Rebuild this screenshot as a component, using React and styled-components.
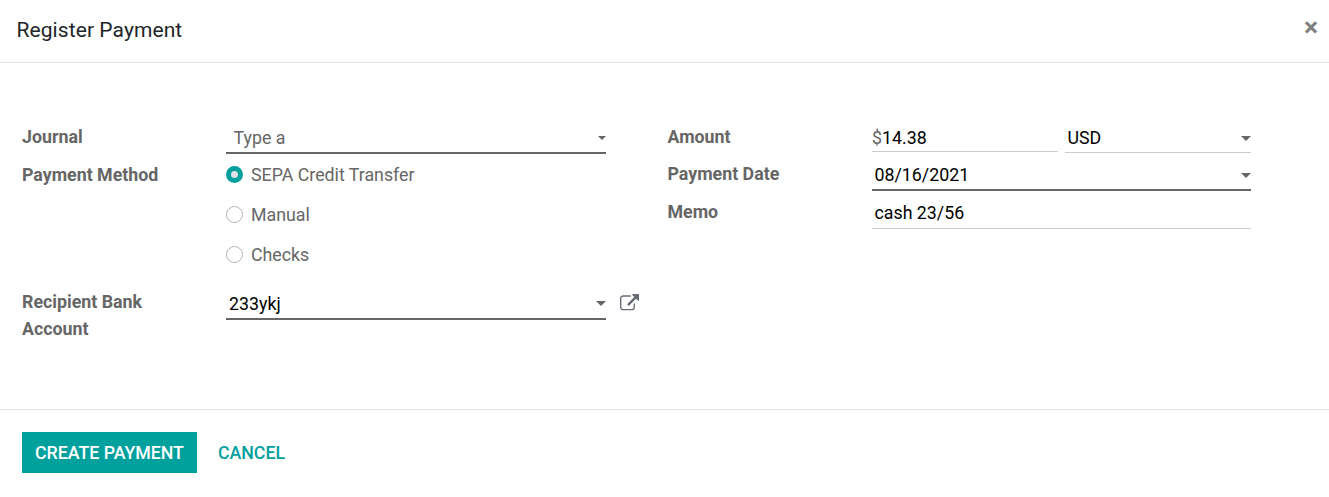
import React from 'react';
import styled, { createGlobalStyle } from 'styled-components';

const GlobalStyle = createGlobalStyle`
  * {
    box-sizing: border-box;
  }
  body {
    margin: 0;
    background: #fff;
    font-family: Roboto, sans-serif;
    font-size: 17.8px;
    line-height: 27px;
    color: #666;
  }
`

const Modal = styled.div`
  display: flex;
  flex-direction: column;
  height: 497px;
`

const Header = styled.header`
  display: flex;
  justify-content: space-between;
  height: 63px;
  padding: 16px 11px 0 16.5px;
  border-bottom: 1px solid #dee2e6;
`

const Title = styled.h4`
  margin: 0;
  font-size: 21px;
  font-weight: 400;
  line-height: 28px;
  letter-spacing: 0.08px;
  color: #212529;
`

const CloseButton = styled.button`
  margin: -3px 0 0 0;
  padding: 0;
  border: 0;
  background: none;
  font: 700 26.6px/27px Roboto, sans-serif;
  height: 27px;
  color: #7f7f7f;
`

const Body = styled.main`
  display: flex;
  gap: 27.5px;
  height: 346px;
  padding: 59px 22px 0;
`

const Group = styled.div`
  flex: none;
  width: ${ props => props.$width }px;
`

const Row = styled.div`
  display: flex;
  height: ${ props => props.$height }px;
`

const Label = styled.label`
  flex: none;
  width: ${ props => props.$width || 204 }px;
  padding: ${ props => props.$top || 0 }px 50px 0 0;
  font-weight: 700;
`

const Field = styled.div`
  display: flex;
  flex: none;
  align-items: center;
  justify-content: space-between;
  width: ${ props => props.$width || 379 }px;
  height: ${ props => props.$height || 32 }px;
  padding-top: ${ props => props.$top || 0 }px;
  padding-bottom: ${ props => props.$bottom || 0 }px;
  padding-left: ${ props => props.$indent === undefined ? 3 : props.$indent }px;
  border-bottom: ${ props => props.$required ? "2px solid #666" : "1px solid #ccc" };
  color: ${ props => props.$muted ? "#666" : "#000" };
`

const CurrencyField = styled(Field)`
  margin-left: 7px;
`

const Currency = styled.span`
  color: #666;
`

const Caret = styled.span`
  width: 0;
  height: 0;
  margin-top: ${ props => props.$top || 0 }px;
  border: ${ props => props.$size || 5 }px solid transparent;
  border-top-color: #666;
  border-bottom: 0;
`

const Options = styled.div`
  display: flex;
  flex-direction: column;
  gap: 13px;
`

const Option = styled.label`
  display: flex;
  align-items: center;
  gap: 8px;
`

const Radio = styled.span`
  width: 17px;
  height: 17px;
  border: ${ props => props.$checked ? "5px solid #00a09d" : "1px solid #adb5bd" };
  border-radius: 50%;
  background: ${ props => props.$checked ? "#dee2e6" : "#fff" };
`

const LinkButton = styled.button`
  display: flex;
  margin: 6px 0 0 14px;
  padding: 0;
  border: 0;
  background: none;
  align-self: flex-start;
  color: #666b75;
`

const Footer = styled.footer`
  display: flex;
  flex: 1;
  align-items: flex-start;
  padding: 22px;
  border-top: 1px solid #dee2e6;
`

const Button = styled.button`
  height: 41px;
  padding: 0 ${ props => props.$primary ? 13 : 21 }px;
  border: 0;
  background: ${ props => props.$primary ? "#00a09d" : "transparent" };
  color: ${ props => props.$primary ? "#fff" : "#00a09d" };
  font: 500 17.8px/41px Roboto, sans-serif;
  letter-spacing: -0.03px;
  text-transform: uppercase;
  white-space: nowrap;
`

const METHODS = ["SEPA Credit Transfer", "Manual", "Checks"]

const ExternalLinkIcon = () => (
  <svg width="19" height="19" viewBox="0 0 1792 1792" fill="currentColor">
    <path d="M1408 928v320q0 119-84.5 203.5t-203.5 84.5h-832q-119 0-203.5-84.5t-84.5-203.5v-832q0-119 84.5-203.5t203.5-84.5h704q14 0 23 9t9 23v64q0 14-9 23t-23 9h-704q-66 0-113 47t-47 113v832q0 66 47 113t113 47h832q66 0 113-47t47-113v-320q0-14 9-23t23-9h64q14 0 23 9t9 23zm384-864v512q0 26-19 45t-45 19-45-19l-176-176-652 652q-10 10-23 10t-23-10l-114-114q-10-10-10-23t10-23l652-652-176-176q-19-19-19-45t19-45 45-19h512q26 0 45 19t19 45z"/>
  </svg>
)

class RegisterPayment extends React.Component {
  state = {
    method: METHODS[0]
  }

  setMethod(method) {
    this.setState({ method });
  }

  render() {
    return (
      <Modal>
        <Header>
          <Title>Register Payment</Title>
          <CloseButton aria-label="Close">×</CloseButton>
        </Header>
        <Body>
          <Group $width={ 618 }>
            <Row $height={ 39 }>
              <Label $top={ 1 }>Journal</Label>
              <Field $width={ 380 } $indent={ 7.5 } $required $muted>
                Type a
                <Caret $size={ 4 } $top={ 2 }/>
              </Field>
            </Row>
            <Row $height={ 127 }>
              <Label>Payment Method</Label>
              <Options>
                {
                  METHODS.map(m =>
                    <Option key={ m } onClick={ this.setMethod.bind(this, m) }>
                      <Radio $checked={ m === this.state.method }/>
                      { m }
                    </Option>
                  , this)
                }
              </Options>
            </Row>
            <Row $height={ 54 }>
              <Label>Recipient Bank Account</Label>
              <Field $width={ 380 } $required>
                233ykj
                <Caret />
              </Field>
              <LinkButton aria-label="External link"><ExternalLinkIcon /></LinkButton>
            </Row>
          </Group>
          <Group $width={ 583.5 }>
            <Row $height={ 38 }>
              <Label $width={ 204.5 } $top={ 1 }>Amount</Label>
              <Field $width={ 186 } $height={ 30 } $top={ 2 } $indent={ 0 }>
                <span><Currency>$</Currency>14.38</span>
              </Field>
              <CurrencyField $width={ 186 } $height={ 31 } $indent={ 2.5 }>
                USD
                <Caret $top={ 2 }/>
              </CurrencyField>
            </Row>
            <Row $height={ 38 }>
              <Label $width={ 204.5 }>Payment Date</Label>
              <Field $height={ 31 } $indent={ 2.5 } $required>
                08/16/2021
                <Caret $top={ 2 }/>
              </Field>
            </Row>
            <Row $height={ 38 }>
              <Label $width={ 204.5 }>Memo</Label>
              <Field $height={ 31 } $bottom={ 2 } $indent={ 2.5 }>cash 23/56</Field>
            </Row>
          </Group>
        </Body>
        <Footer>
          <Button $primary>Create Payment</Button>
          <Button>Cancel</Button>
        </Footer>
      </Modal>
    )
  }
}

export default function App() {
  return (
    <>
      <GlobalStyle />
      <RegisterPayment />
    </>
  )
}
